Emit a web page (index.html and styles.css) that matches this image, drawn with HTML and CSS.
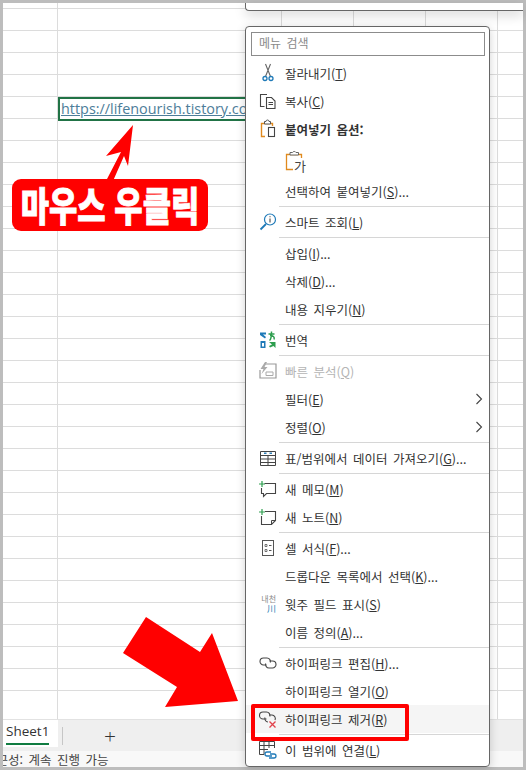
FILE: index.html
```html
<!DOCTYPE html>
<html lang="ko">
<head>
<meta charset="UTF-8">
<meta name="viewport" content="width=device-width, initial-scale=1.0">
<title>하이퍼링크 제거</title>
<link rel="stylesheet" href="styles.css">
</head>
<body>

<div class="window">
  <div class="sheet">
    <div class="col col-a"></div>
    <div class="col col-b"></div>
    <div class="col"></div>
    <div class="col"></div>
    <div class="col"></div>
    <div class="cell">https://lifenourish.tistory.com</div>
  </div>
  <div class="tabs">
    <div class="tab"><span>Sheet1</span></div>
    <div class="tab-divider"></div>
    <div class="tab-add">+</div>
  </div>
  <div class="status"><span>접근성: 계속 진행 가능</span></div>
</div>

<div class="mini-toolbar"></div>

<div class="menu">
  <div class="search">메뉴 검색</div>
  <div class="items">

    <div class="item">
      <svg class="ico" viewBox="0 0 20 20"><path d="M7.500 1l5 12.500M12.500 1l-5 12.500" fill="none" stroke="#666" stroke-width="1.100"/><circle cx="7" cy="15.500" r="2" fill="none" stroke="#1f7ab8" stroke-width="1.300"/><circle cx="13" cy="15.500" r="2" fill="none" stroke="#1f7ab8" stroke-width="1.300"/></svg>
      <span class="txt">잘라내기(<u>T</u>)</span>
    </div>
    <div class="item">
      <svg class="ico" viewBox="0 0 20 20"><path d="M6.500 15.500H2.500V3.500H9" fill="none" stroke="#444" stroke-width="1.100"/><path d="M8.500 6.500h5l3.500 3.500v7.500H8.500z" fill="#fff" stroke="#444" stroke-width="1.100"/><path d="M10.500 11.500h4.500M10.500 13.500h4.500" stroke="#444" stroke-width="1"/></svg>
      <span class="txt">복사(<u>C</u>)</span>
    </div>
    <div class="item item-head">
      <svg class="ico" viewBox="0 0 20 20"><path d="M7 17.500H3.500V4.500H14.500V7" fill="none" stroke="#e08a1e" stroke-width="1.400"/><path d="M6.500 5V2.500h1.500a1.500 1.500 0 0 1 3 0h1.500V5z" fill="#fff" stroke="#555" stroke-width="1"/><rect x="10.500" y="8.500" width="6" height="9" fill="#fff" stroke="#444" stroke-width="1.100"/></svg>
      <span class="txt">붙여넣기 옵션:</span>
    </div>
    <div class="item item-paste">
      <div class="paste-ico txt">
        <svg viewBox="0 0 20 25"><path d="M8 21.500H1.500V6.500H16.500V10" fill="none" stroke="#e08a1e" stroke-width="1.300"/><path d="M5 7V4.500h2.500a2 2 0 0 1 3.500 0h2.500V7z" fill="#fff" stroke="#666" stroke-width="1"/></svg>
        <span>가</span>
      </div>
    </div>
    <div class="item"><span class="txt">선택하여 붙여넣기(<u>S</u>)...</span></div>
    <div class="sep"></div>
    <div class="item">
      <svg class="ico" viewBox="0 0 20 20"><circle cx="12" cy="7.500" r="5.500" fill="none" stroke="#1f7ab8" stroke-width="1.200"/><path d="M8 12L2.500 17.500" stroke="#1f7ab8" stroke-width="1.800"/><path d="M12 6.500v4" stroke="#444" stroke-width="1.100"/><path d="M12 4.300v1" stroke="#444" stroke-width="1.100"/></svg>
      <span class="txt">스마트 조회(<u>L</u>)</span>
    </div>
    <div class="sep"></div>
    <div class="item"><span class="txt">삽입(<u>I</u>)...</span></div>
    <div class="item"><span class="txt">삭제(<u>D</u>)...</span></div>
    <div class="item"><span class="txt">내용 지우기(<u>N</u>)</span></div>
    <div class="sep"></div>
    <div class="item">
      <svg class="ico" viewBox="0 0 20 20"><path d="M2 2.500h6v2H5l3 2.500-1 1.500-5-3.500z" fill="#1f7ab8"/><path d="M2.500 11h5v7h-5zM4 13v3.500h2V13z" fill="#1f7ab8" fill-rule="evenodd"/><path d="M10.500 4h6M13.500 1.500c0 5-.5 8-2 9M12 5.500c3 0 5 1.500 4 4" fill="none" stroke="#2e9e4f" stroke-width="1.500"/><path d="M11 12l6.500 0v6l-2-2-3.500 1.500-1-1.500 3-1.500z" fill="#2e9e4f"/></svg>
      <span class="txt">번역</span>
    </div>
    <div class="sep"></div>
    <div class="item item-off">
      <svg class="ico" viewBox="0 0 20 20"><path d="M6 3h12v14H2v-8" fill="none" stroke="#999" stroke-width="1.200"/><path d="M7 1L2.500 8h3L3.500 13l6-7H6.500L9 1z" fill="#aaa"/><path d="M8 11h7v3.500H8z" fill="none" stroke="#aaa"/></svg>
      <span class="txt">빠른 분석(<u>Q</u>)</span>
    </div>
    <div class="item"><span class="txt">필터(<u>E</u>)</span><svg class="chev" viewBox="0 0 8 12"><path d="M1.500 1l5 5-5 5" fill="none" stroke="#444" stroke-width="1.100"/></svg></div>
    <div class="item"><span class="txt">정렬(<u>O</u>)</span><svg class="chev" viewBox="0 0 8 12"><path d="M1.500 1l5 5-5 5" fill="none" stroke="#444" stroke-width="1.100"/></svg></div>
    <div class="sep"></div>
    <div class="item">
      <svg class="ico" viewBox="0 0 20 20"><path d="M2.500 3.500h15v14h-15zM2.500 7.500h15M2.500 11h15M2.500 14.500h15M10 7.500v10" fill="none" stroke="#444" stroke-width="1"/><path d="M6 4.500h2.500v1.500H6zM11.500 4.500H14v1.500h-2.500z" fill="#2f7fb5"/></svg>
      <span class="txt">표/범위에서 데이터 가져오기(<u>G</u>)...</span>
    </div>
    <div class="sep"></div>
    <div class="item">
      <svg class="ico" viewBox="0 0 20 20"><path d="M6.500 4.500h11v10H8.500l-3 3v-3H3.500V9" fill="none" stroke="#444" stroke-width="1.100"/><path d="M4 2v6M1 5h6" stroke="#2e9e4f" stroke-width="1.200"/></svg>
      <span class="txt">새 메모(<u>M</u>)</span>
    </div>
    <div class="item">
      <svg class="ico" viewBox="0 0 20 20"><path d="M7 4.500h10.500v9l-4 4h-10V9" fill="none" stroke="#444" stroke-width="1.100"/><path d="M13.500 17.500v-4h4" fill="none" stroke="#444"/><path d="M4 2v6M1 5h6" stroke="#2e9e4f" stroke-width="1.200"/></svg>
      <span class="txt">새 노트(<u>N</u>)</span>
    </div>
    <div class="sep"></div>
    <div class="item">
      <svg class="ico" viewBox="0 0 20 20"><rect x="4.500" y="2.500" width="11" height="15" fill="none" stroke="#555" stroke-width="1"/><path d="M7 6.500h2v2H7zM7 11.500h2v2H7z" fill="none" stroke="#555" stroke-width=".8"/><path d="M11 7.500h2.500M11 12.500h2.500" stroke="#555"/></svg>
      <span class="txt">셀 서식(<u>F</u>)...</span>
    </div>
    <div class="item"><span class="txt">드롭다운 목록에서 선택(<u>K</u>)...</span></div>
    <div class="item">
      <div class="ruby-ico"><span>내천</span><b>川</b></div>
      <span class="txt">윗주 필드 표시(<u>S</u>)</span>
    </div>
    <div class="item"><span class="txt">이름 정의(<u>A</u>)...</span></div>
    <div class="sep"></div>
    <div class="item">
      <svg class="ico" viewBox="0 0 20 20"><path d="M8.500 12H5.500a3.500 3.500 0 0 1 0-7H9a3.500 3.500 0 0 1 3.300 4.500" fill="none" stroke="#444" stroke-width="1.100"/><path d="M11.500 8H14.500a3.500 3.500 0 0 1 0 7H11a3.500 3.500 0 0 1-3.300-4.500" fill="none" stroke="#444" stroke-width="1.100"/></svg>
      <span class="txt">하이퍼링크 편집(<u>H</u>)...</span>
    </div>
    <div class="item"><span class="txt">하이퍼링크 열기(<u>O</u>)</span></div>
    <div class="item item-hover">
      <svg class="ico" viewBox="0 0 20 20"><path d="M8.500 10H5a3.500 3.500 0 0 1 0-7h3.500A3.500 3.500 0 0 1 11.800 7.500" fill="none" stroke="#444" stroke-width="1.100"/><path d="M11 6H14a3.500 3.500 0 0 1 3 5M10 13a3.500 3.500 0 0 1-3-4.500" fill="none" stroke="#444" stroke-width="1.100"/><path d="M11.500 12.500l6 6M17.500 12.500l-6 6" stroke="#e0414b" stroke-width="1.300"/></svg>
      <span class="txt">하이퍼링크 제거(<u>R</u>)</span>
    </div>
    <div class="sep"></div>
    <div class="item">
      <svg class="ico" viewBox="0 0 20 20"><path d="M6 14.500H1.500v-13h15V8M1.500 5.500h15M1.500 9.500H10M6 1.500v13M11 1.500V8" fill="none" stroke="#444" stroke-width="1"/><path d="M13 12h-4a2 2 0 0 0 0 4h5M12 14h4a2 2 0 0 1 0 4h-5" fill="none" stroke="#1f7ab8" stroke-width="1.300"/></svg>
      <span class="txt">이 범위에 연결(<u>L</u>)</span>
    </div>
  </div>
</div>

<!-- annotations drawn over the screenshot -->
<svg class="arrows" viewBox="0 0 526 770">
  <path d="M133 125L106 156 121 152 107 179 113 181 124 156 128 166z" fill="#f00"/>
  <path d="M146 617L123 653 177 687 165 707 238 701 212 633 200 652z" fill="#f00"/>
</svg>
<div class="label"><span>마우스 우클릭</span></div>
<div class="highlight"></div>

</body>
</html>
```

FILE: styles.css
```css
body {
  margin: 0;
  width: 526px;
  height: 770px;
  overflow: hidden;
  position: relative;
  background: #fff;
  font-family: "Noto Sans CJK KR", "Noto Sans", sans-serif;
}

.window {
  box-sizing: border-box;
  width: 526px;
  height: 770px;
  border: 3px solid #bdbdbd;
  display: flex;
  flex-direction: column;
  background: #fff;
}

.sheet {
  height: 716px;
  position: relative;
  display: flex;
  background-color: #fff;
  background-image: repeating-linear-gradient(to bottom, transparent 0, transparent 21px, #dcdcdc 21px, #dcdcdc 22px);
  background-position: 0 -16px;
}

.col {
  width: 71px;
  border-right: 1px solid #dcdcdc;
}

.col-a {
  width: 54px;
}

.col-b {
  width: 223px;
}

/* runs on under the context menu */
.cell {
  position: absolute;
  left: 55px;
  top: 94px;
  width: 223px;
  height: 24px;
  box-sizing: border-box;
  padding-left: 1px;
  border: 2px solid #217346;
  white-space: nowrap;
  background: #fff;
  font-family: "Open Sans", sans-serif;
  font-size: 14.400px;
  line-height: 20px;
  color: #4d7d99;
  text-decoration: underline;
}

.tabs {
  height: 32px;
  display: flex;
  align-items: center;
  background: #efefef;
  border-top: 1px solid #e2e2e2;
  box-sizing: border-box;
}

.tab {
  width: 55px;
  height: 27px;
  align-self: flex-start;
  background: #fff;
  font-family: "Open Sans", sans-serif;
  font-size: 13.500px;
  color: #333;
  box-sizing: border-box;
  padding-left: 3px;
}

.tab span {
  display: inline-block;
  line-height: 22px;
  padding-bottom: 1px;
  border-bottom: 2px solid #107c41;
}

.tab-divider {
  width: 1px;
  height: 18px;
  margin-left: 4px;
  background: #c6c6c6;
}

.tab-add {
  margin-left: 41px;
  font-family: "Open Sans", sans-serif;
  font-size: 21px;
  font-weight: 300;
  line-height: 22px;
  color: #333;
}

.status {
  height: 16px;
  overflow: hidden;
  background: #f8f8f8;
  font-size: 12.500px;
  word-spacing: 2px;
  line-height: 18px;
  color: #444;
  white-space: nowrap;
}

.status span {
  margin-left: -18px;
}

.mini-toolbar {
  position: absolute;
  left: 245px;
  top: 3px;
  right: 3px;
  height: 7px;
  background: #fff;
  border: 1px solid #666;
  border-top: 0;
  border-right: 0;
  border-radius: 0 0 0 4px;
  box-shadow: 0 4px 12px rgba(0, 0, 0, 0.18);
}

.menu {
  position: absolute;
  left: 245px;
  top: 26px;
  width: 245px;
  height: 741px;
  box-sizing: border-box;
  background: #fff;
  border: 1px solid #666;
  border-radius: 4px;
  box-shadow: 0 2px 10px rgba(0, 0, 0, 0.18);
  padding-top: 5px;
}

.search {
  box-sizing: border-box;
  margin-left: 5px;
  width: 234px;
  height: 24px;
  border: 1px solid #8c8c8c;
  padding-left: 7px;
  font-size: 12px;
  word-spacing: 2px;
  line-height: 20px;
  color: #8a8a8a;
}

.items {
  margin-top: 3px;
}

.item {
  height: 28px;
  display: grid;
  grid-template-columns: 39px 1fr auto;
  align-items: center;
  font-size: 12.500px;
  word-spacing: 2px;
  color: #333;
  white-space: nowrap;
}

.txt {
  grid-column: 2;
}

.item u {
  text-underline-offset: 1px;
}

.item-head {
  font-weight: 700;
}

.item-paste {
  height: 34px;
}

.item-off {
  color: #b5b5b5;
}

.item-hover {
  background: #f5f5f5;
}

.ico {
  width: 20px;
  height: 20px;
  margin-left: 12px;
}

.chev {
  grid-column: 3;
  width: 8px;
  height: 12px;
  margin-right: 6px;
}

.sep {
  height: 1px;
  margin: 1px 0 1px 33px;
  background: #d6d6d6;
}

.paste-ico {
  position: relative;
  width: 20px;
  height: 25px;
}

.paste-ico svg {
  width: 20px;
  height: 25px;
}

.paste-ico span {
  position: absolute;
  left: 9px;
  top: 9px;
  font-size: 13px;
  line-height: 18px;
  color: #444;
}

.ruby-ico {
  width: 18px;
  margin-left: 12px;
  text-align: right;
  line-height: 10px;
}

.ruby-ico span {
  display: block;
  font-size: 8px;
  color: #8a8a8a;
}

.ruby-ico b {
  display: block;
  font-size: 9px;
  font-weight: 400;
  color: #2f7fb5;
}

.arrows {
  position: absolute;
  left: 0;
  top: 0;
  width: 526px;
  height: 770px;
  pointer-events: none;
}

.label {
  position: absolute;
  left: 12px;
  top: 179px;
  width: 196px;
  height: 52px;
  border-radius: 9px;
  background: #f00;
  color: #fff;
  font-size: 40px;
  font-weight: 900;
  line-height: 50px;
  text-align: center;
  white-space: nowrap;
  -webkit-text-stroke: 0.8px #fff;
}

.label span {
  display: inline-block;
  margin: 0 -40px;
  transform: scaleX(0.77);
}

.highlight {
  position: absolute;
  left: 251px;
  top: 704px;
  width: 158px;
  height: 37px;
  box-sizing: border-box;
  border: 4px solid #f00;
  border-radius: 2px;
}
```
